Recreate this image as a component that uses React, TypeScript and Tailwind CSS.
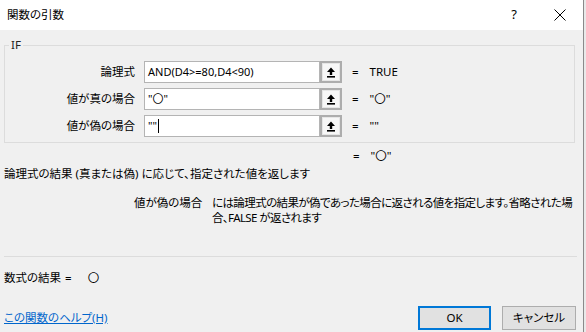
import React from 'react';

const font = "font-['Noto_Sans','Noto_Sans_CJK_JP',sans-serif] [font-feature-settings:'palt']";

const UpArrow: React.FC = () => (
  <svg width="10" height="11" viewBox="0 0 10 11" className="block">
    <path d="M5 0.5 L9 5 L6.2 5 L6.2 8 L3.8 8 L3.8 5 L1 5 Z" fill="#000" />
    <rect x="1" y="9" width="8" height="1.6" fill="#000" />
  </svg>
);

interface ArgRowProps {
  label: string;
  value: string;
  result: string;
  caret?: boolean;
}

const ArgRow: React.FC<ArgRowProps> = ({ label, value, result, caret = false }) => (
  <div className="flex items-center h-[22px]">
    <div className="w-[130px] text-right shrink-0">{label}</div>
    <div className="ml-[9px] w-[176px] h-[22px] border border-[#b4b4b4] bg-white pl-[3px] flex items-center text-[11px]">
      <span>{value}</span>
      {caret && <span className="ml-[1px] inline-block w-px h-[14px] bg-black" />}
    </div>
    <div className="w-[22px] h-[22px] border-2 border-[#adadad] bg-[#e6e6e6] p-px">
      <div className="w-full h-full bg-[#f7f7f7] flex items-center justify-center">
        <UpArrow />
      </div>
    </div>
    <span className="ml-[10px]">=</span>
    <span className="ml-[11px]">{result}</span>
  </div>
);

export default function App() {
  return (
    <div className={`w-[586px] h-[332px] flex text-[11.5px] text-black overflow-hidden ${font}`}>
      <div className="w-[583px] h-full flex flex-col bg-[#f0f0f0]">
        {/* title bar */}
        <div className="h-[30px] bg-white flex items-center pl-[7px] shrink-0">
          <span className="flex-1">関数の引数</span>
          <span className="mr-[37px] text-[13px]">?</span>
          <svg width="12" height="12" viewBox="0 0 12 12" className="mr-[17px]">
            <path d="M0.5 0.5 L11.5 11.5 M11.5 0.5 L0.5 11.5" stroke="#000" strokeWidth="1" />
          </svg>
        </div>

        <div className="px-[4px] flex flex-col">
          <fieldset className="mt-[7px] w-[571px] border border-[#dcdcdc] pb-[5px] px-0">
            <legend className="ml-[4px] px-[2px] leading-[16px] text-[#222]">IF</legend>
            <div className="mt-[8px] flex flex-col gap-[5px]">
              <ArgRow label="論理式" value="AND(D4>=80,D4<90)" result="TRUE" />
              <ArgRow label="値が真の場合" value={'"〇"'} result={'"〇"'} />
              <ArgRow label="値が偽の場合" value={'""'} result={'""'} caret />
            </div>
          </fieldset>

          <div className="mt-[5px] pl-[349px] leading-[16px] flex">
            <span>=</span>
            <span className="ml-[11px]">"〇"</span>
          </div>

          <div className="mt-[2px] leading-[16px]">
            論理式の結果 (真または偽) に応じて、指定された値を返します
          </div>

          <div className="mt-[13px] flex leading-[15px]">
            <div className="pl-[130px] w-[208px] shrink-0">値が偽の場合</div>
            <div className="flex-1 tracking-[-0.6px]">
              には論理式の結果が偽であった場合に返される値を指定します。省略された場合、FALSE が返されます
            </div>
          </div>

          <div className="mt-[31px] w-[573px] border-t border-[#dcdcdc]" />

          <div className="mt-[13px] leading-[16px] flex">
            <span>数式の結果</span>
            <span className="ml-[4px]">=</span>
            <span className="ml-[16px]">〇</span>
          </div>

          <div className="mt-[20px] flex items-center">
            <a className="flex-1 text-[#0066cc] underline leading-[16px]">この関数のヘルプ(H)</a>
            <button className="w-[73px] h-[24px] border-2 border-[#0078d7] bg-[#e1e1e1] flex items-center justify-center">
              OK
            </button>
            <button className="ml-[11px] mr-[3px] w-[74px] h-[24px] border border-[#adadad] bg-[#e1e1e1] flex items-center justify-center">
              キャンセル
            </button>
          </div>
        </div>
      </div>
      <div className="w-px h-full bg-[#8a8a8a]" />
      <div className="flex-1 h-full bg-[#e9e9e9]" />
    </div>
  );
}
